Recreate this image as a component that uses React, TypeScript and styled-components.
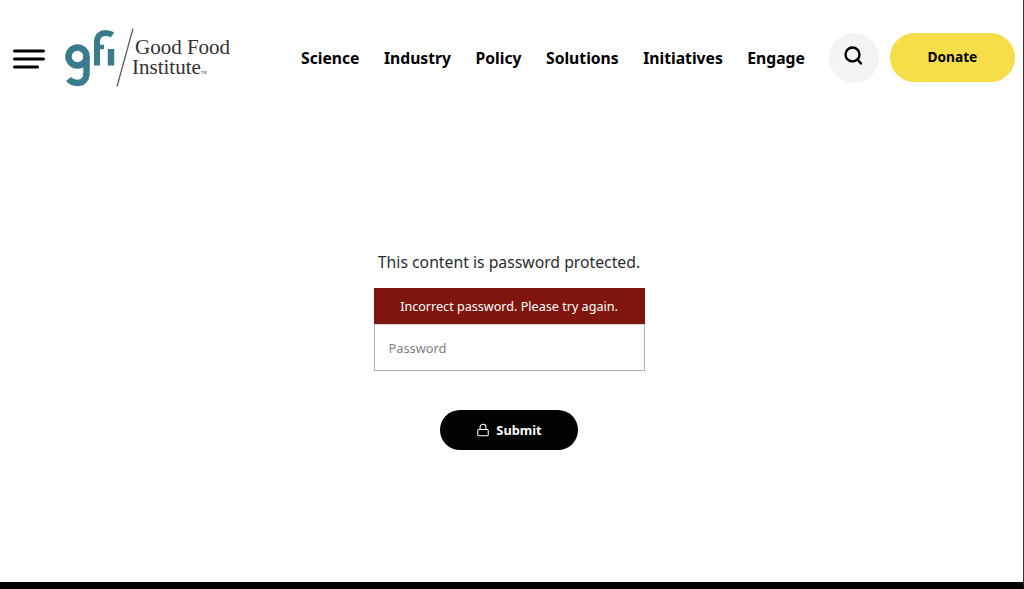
import React from "react";
import styled, { createGlobalStyle } from "styled-components";
import { Lock } from "lucide-react";

const Global = createGlobalStyle`
  html, body { margin: 0; padding: 0; background: #fff; }
  body { font-family: "Noto Sans", "Liberation Sans", sans-serif; color: #222; }
`;

const Page = styled.div`
  width: 1024px;
  height: 589px;
  box-sizing: border-box;
  border-right: 1.5px solid #333;
  border-bottom: 7px solid #000;
  display: flex;
  flex-direction: column;
  overflow: hidden;
`;

const Header = styled.header`
  display: flex;
  align-items: center;
  height: 115px;
  padding: 0 8px 0 13px;
`;

const Burger = styled.svg`
  width: 32px;
  height: 24px;
  flex: none;
`;

const LogoWrap = styled.div`
  display: flex;
  align-items: center;
  margin-left: 20px;
  flex: none;
  width: 171px;
`;

const LogoMark = styled.svg`
  width: 72px;
  height: 62px;
  flex: none;
  display: block;
`;

const LogoText = styled.div`
  font-family: "Liberation Serif", serif;
  font-size: 21px;
  line-height: 20px;
  color: #333;
  margin-left: -5px;
  white-space: nowrap;
  margin-top: 5px;
`;

const LogoLine = styled.div<{ $indent: number }>`
  margin-left: ${(p) => p.$indent}px;
`;

const Tm = styled.span`
  font-size: 4px;
`;

const Nav = styled.nav`
  display: flex;
  align-items: center;
  gap: 24.5px;
  margin-left: 65px;
  font-family: "Noto Sans", sans-serif;
  font-weight: 700;
  font-size: 15.7px;
  color: #000;
`;

const NavItem = styled.a`
  white-space: nowrap;
`;

const SearchButton = styled.button`
  width: 50px;
  height: 50px;
  border-radius: 50%;
  border: 0;
  padding: 0;
  background: #f3f5f4;
  margin-left: 24px;
  display: flex;
  align-items: center;
  justify-content: center;
  flex: none;
`;

const Donate = styled.button`
  width: 125px;
  height: 49px;
  margin-left: 11px;
  border: 0;
  border-radius: 25px;
  background: #f6de4a;
  color: #000;
  font-family: "Noto Sans", sans-serif;
  font-weight: 700;
  font-size: 13.7px;
  padding: 0 0 2px;
  flex: none;
`;

const Main = styled.main`
  flex: 1;
  display: flex;
  flex-direction: column;
  align-items: center;
  padding-top: 135px;
  padding-right: 5px;
`;

const Notice = styled.p`
  margin: 0 0 14px;
  font-size: 15.75px;
  line-height: 24px;
  color: #2a2d2e;
`;

const PasswordForm = styled.form`
  width: 271px;
  display: flex;
  flex-direction: column;
  align-items: center;
`;

const ErrorBar = styled.div`
  width: 100%;
  height: 36px;
  background: #7f160d;
  color: #fff;
  font-size: 12.6px;
  display: flex;
  align-items: center;
  justify-content: center;
`;

const PasswordInput = styled.input`
  width: 100%;
  height: 47px;
  box-sizing: border-box;
  border: 1px solid #b0b0be;
  border-top: 1px solid #d0d0d8;
  padding: 0 14px;
  font-family: "Noto Sans", sans-serif;
  font-size: 12.8px;
  outline: none;
  &::placeholder { color: #808080; opacity: 1; }
`;

const Submit = styled.button`
  margin-top: 39px;
  width: 138px;
  height: 40px;
  border: 0;
  border-radius: 20px;
  background: #000;
  color: #fff;
  font-family: "Noto Sans", sans-serif;
  font-weight: 700;
  font-size: 12.8px;
  display: flex;
  align-items: center;
  justify-content: center;
  gap: 6px;
`;

const navItems = ["Science", "Industry", "Policy", "Solutions", "Initiatives", "Engage"];

export default function App() {
  return (
    <>
      <Global />
      <Page>
        <Header>
          <Burger viewBox="0 0 32 24" aria-hidden>
            <g stroke="#000" strokeWidth="3" strokeLinecap="round">
              <line x1="1.5" y1="5" x2="30.5" y2="5" />
              <line x1="1.5" y1="13" x2="30.5" y2="13" />
              <line x1="1.5" y1="21" x2="24.5" y2="21" />
            </g>
          </Burger>
          <LogoWrap>
            <LogoMark viewBox="0 0 72 62" aria-label="gfi">
              <g fill="none" stroke="#3a7b8c">
                <circle cx="12.5" cy="29.5" r="9" strokeWidth="6.5" />
                <path strokeWidth="6.5" d="M21.5 29 V46 C21.5 53 17 56 12.5 56 C9 56 6 55 3.5 52" />
                <path strokeWidth="6" d="M32 38.5 V15 C32 9 36 6 40.5 6 C43.5 6 45.5 6.5 47.5 8" />
                <path strokeWidth="4.5" d="M32 20 H39" />
                <path strokeWidth="6.5" d="M46 22 V38.5" />
              </g>
              <line x1="52" y1="59.5" x2="68" y2="1.5" stroke="#555" strokeWidth="1.2" />
            </LogoMark>
            <LogoText>
              <LogoLine $indent={3}>Good Food</LogoLine>
              <LogoLine $indent={0}>Institute<Tm>TM</Tm></LogoLine>
            </LogoText>
          </LogoWrap>
          <Nav>
            {navItems.map((n) => (
              <NavItem key={n}>{n}</NavItem>
            ))}
          </Nav>
          <SearchButton aria-label="Search">
            <svg width="24" height="24" viewBox="0 0 24 24" fill="none" stroke="#000" strokeWidth="2.4" strokeLinecap="round" style={{ transform: "translate(-1px,-2px)" }}>
              <circle cx="11.5" cy="10.5" r="7" />
              <line x1="16.5" y1="15.5" x2="20" y2="19.5" />
            </svg>
          </SearchButton>
          <Donate>Donate</Donate>
        </Header>
        <Main>
          <Notice>This content is password protected.</Notice>
          <PasswordForm>
            <ErrorBar>Incorrect password. Please try again.</ErrorBar>
            <PasswordInput placeholder="Password" />
            <Submit type="button">
              <Lock size={14} strokeWidth={1.8} />
              Submit
            </Submit>
          </PasswordForm>
        </Main>
      </Page>
    </>
  );
}
